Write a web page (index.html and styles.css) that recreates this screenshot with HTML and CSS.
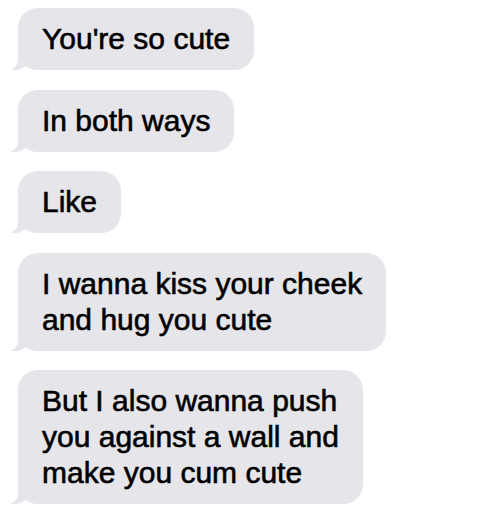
FILE: index.html
```html
<!DOCTYPE html>
<html lang="en">
  <head>
    <meta charset="UTF-8" />
    <meta name="viewport" content="width=device-width, initial-scale=1.0" />
    <title>Messages</title>
    <link rel="stylesheet" href="styles.css">
  </head>
  <body>
    <!-- Received messages -->
    <div class="thread">
      <div class="bubble">You're so cute</div>
      <div class="bubble">In both ways</div>
      <div class="bubble">Like</div>
      <div class="bubble">I wanna kiss your cheek<br>and hug you cute</div>
      <div class="bubble">But I also wanna push<br>you against a wall and<br>make you cum cute</div>
    </div>
  </body>
</html>
```
FILE: styles.css
```css
body {
  margin: 0;
  background: #fff;
  font-family: "Liberation Sans", Arial, sans-serif;
}
.thread {
  display: flex;
  flex-direction: column;
  align-items: flex-start;
  gap: 19.5px;
  padding: 8px 0 0 18px;
}
.bubble {
  position: relative;
  background: #e5e5ea;
  color: #000;
  font-size: 30px;
  line-height: 36px;
  padding: 13px 24px 13px 24px;
  border-radius: 20px;
  -webkit-text-stroke: 0.6px #000;
}
.bubble::before {
  content: "";
  position: absolute;
  bottom: 0;
  left: -7px;
  width: 20px;
  height: 22px;
  background: #e5e5ea;
  border-bottom-right-radius: 16px;
}
.bubble::after {
  content: "";
  position: absolute;
  bottom: 0;
  left: -10px;
  width: 10px;
  height: 22px;
  background: #fff;
  border-bottom-right-radius: 10px;
}
```
